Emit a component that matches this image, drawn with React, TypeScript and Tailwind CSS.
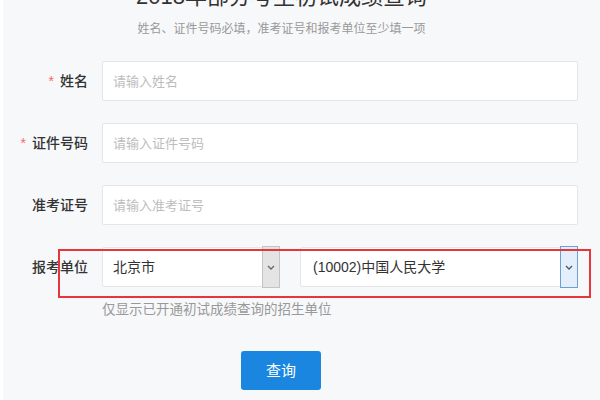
const fields = [
  { label: '姓名', placeholder: '请输入姓名', required: true },
  { label: '证件号码', placeholder: '请输入证件号码', required: true },
  { label: '准考证号', placeholder: '请输入准考证号', required: false },
];

const Chevron = ({ color }: { color: string }) => (
  <svg width="8" height="5" viewBox="0 0 8 5" fill="none">
    <path d="M1 1l3 3 3-3" stroke={color} strokeWidth="1.3" />
  </svg>
);

const App = () => {
  return (
    <div
      className="w-[600px] h-[400px] overflow-hidden bg-[#f7f8fa] border-l-[3px] border-white"
      style={{ fontFamily: '"Liberation Sans", "Noto Sans CJK SC", sans-serif' }}
    >
      {/* Header */}
      <div className="w-[557px] text-center">
        <h1 className="mt-[-17px] text-[22px] leading-[28px] text-[#333]">2018年部分考生初试成绩查询</h1>
        <p className="mt-[10px] text-[12px] leading-[16px] text-[#999]">
          姓名、证件号码必填，准考证号和报考单位至少填一项
        </p>
      </div>

      {/* Form */}
      <div className="mt-[24px] flex flex-col gap-[22px] pr-[22px]">
        {fields.map((f) => (
          <div key={f.label} className="flex items-center">
            <label className="w-[99px] pr-[14px] text-right text-[14px] font-medium text-[#333]">
              {f.required && <span className="mr-[6px] text-[#f56c6c]">*</span>}
              {f.label}
            </label>
            <input
              className="flex-1 h-[40px] px-[10px] bg-white border border-[#e6e6e6] rounded-[2px] text-[13px] outline-none placeholder:text-[#bdbdbd]"
              placeholder={f.placeholder}
            />
          </div>
        ))}

        <div className="relative flex items-center">
          <label className="w-[99px] pr-[14px] text-right text-[14px] font-medium text-[#333]">报考单位</label>
          <div className="flex gap-[20px] flex-1">
            <div className="w-[178px] h-[40px] flex items-center bg-white border border-[#e6e6e6] rounded-[2px]">
              <span className="flex-1 pl-[10px] text-[14px] text-[#333]">北京市</span>
              <div className="w-[18px] h-[42px] -mr-px flex items-center justify-center bg-[#e4e4e4] border border-[#c4c4c4]">
                <Chevron color="#666" />
              </div>
            </div>
            <div className="flex-1 h-[40px] flex items-center bg-white border border-[#e6e6e6] rounded-[2px]">
              <span className="flex-1 pl-[12px] text-[14px] text-[#333]">(10002)中国人民大学</span>
              <div className="w-[18px] h-[42px] -mr-px flex items-center justify-center bg-[#e3effa] border border-[#6b9fd6]">
                <Chevron color="#555" />
              </div>
            </div>
          </div>
          {/* highlight box */}
          <div className="absolute left-[55px] top-[2px] w-[533px] h-[49px] border-2 border-[#e8353b]" />
        </div>
      </div>

      <p className="mt-[13px] ml-[99px] text-[13.5px] text-[#999]">仅显示已开通初试成绩查询的招生单位</p>

      <div className="mt-[31px] ml-[238px]">
        <button className="w-[80px] h-[39px] rounded-[3px] bg-[#1a86e0] text-white text-[15px]">查询</button>
      </div>
    </div>
  );
};

export default App;
